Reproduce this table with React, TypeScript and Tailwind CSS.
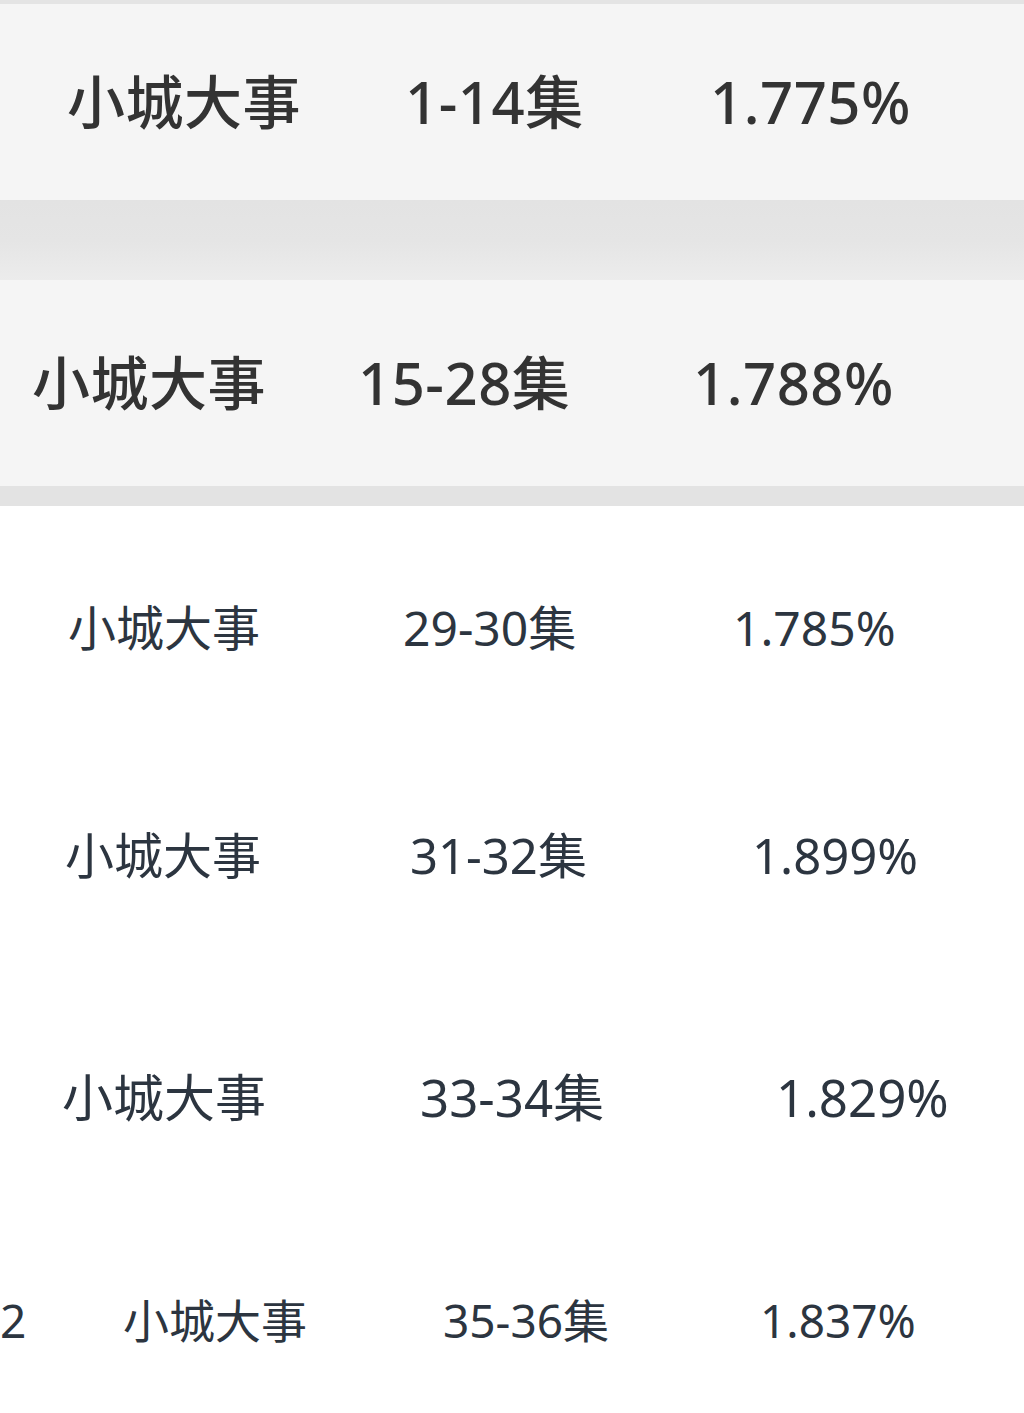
import React from 'react';

const boldRows = [
  {
    name: '小城大事',
    ep: '1-14集',
    rate: '1.775%',
    box: 'h-[196px] pl-[67px] text-[58px]',
    nameW: 'w-[338px]',
    epW: 'w-[305px]',
  },
  {
    name: '小城大事',
    ep: '15-28集',
    rate: '1.788%',
    box: 'h-[206px] pl-[32px] text-[58px]',
    nameW: 'w-[326px]',
    epW: 'w-[335px]',
  },
];

const plainRows = [
  {
    lead: '',
    name: '小城大事',
    ep: '29-30集',
    rate: '1.785%',
    box: 'h-[244px] pl-[68px] text-[48px]',
    leadW: 'hidden',
    nameW: 'w-[335px]',
    epW: 'w-[330px]',
  },
  {
    lead: '',
    name: '小城大事',
    ep: '31-32集',
    rate: '1.899%',
    box: 'h-[210px] pl-[65px] text-[49px]',
    leadW: 'hidden',
    nameW: 'w-[345px]',
    epW: 'w-[342px]',
  },
  {
    lead: '',
    name: '小城大事',
    ep: '33-34集',
    rate: '1.829%',
    box: 'h-[274px] pl-[62px] text-[51px]',
    leadW: 'hidden',
    nameW: 'w-[358px]',
    epW: 'w-[356px]',
  },
  {
    lead: '2',
    name: '小城大事',
    ep: '35-36集',
    rate: '1.837%',
    box: 'h-[172px] pl-0 text-[46px]',
    leadW: 'w-[123px]',
    nameW: 'w-[320px]',
    epW: 'w-[317px]',
  },
];

export default function App() {
  return (
    <div
      className="w-[1024px] h-[1413px] overflow-hidden bg-white"
      style={{ fontFamily: '"Noto Sans", "Noto Sans CJK SC", sans-serif' }}
    >
      <div className="h-[4px] bg-[#e4e4e4]" />
      {boldRows.map((r, i) => (
        <React.Fragment key={r.ep}>
          <div className={`flex items-center bg-[#f5f5f5] font-medium text-[#333333] leading-none tracking-[0.5px] ${r.box}`}>
            <span className={r.nameW}>{r.name}</span>
            <span className={r.epW}>{r.ep}</span>
            <span>{r.rate}</span>
          </div>
          {i === 0 ? (
            <div className="h-[80px] bg-gradient-to-b from-[#e3e3e3] via-[#e5e5e5] to-[#ececec]" />
          ) : (
            <div className="h-[20px] bg-[#e3e3e3]" />
          )}
        </React.Fragment>
      ))}
      <div className="bg-white">
        {plainRows.map((r) => (
          <div key={r.ep} className={`flex items-center font-normal text-[#2c3540] leading-none ${r.box}`}>
            <span className={r.leadW}>{r.lead}</span>
            <span className={r.nameW}>{r.name}</span>
            <span className={r.epW}>{r.ep}</span>
            <span>{r.rate}</span>
          </div>
        ))}
      </div>
    </div>
  );
}
